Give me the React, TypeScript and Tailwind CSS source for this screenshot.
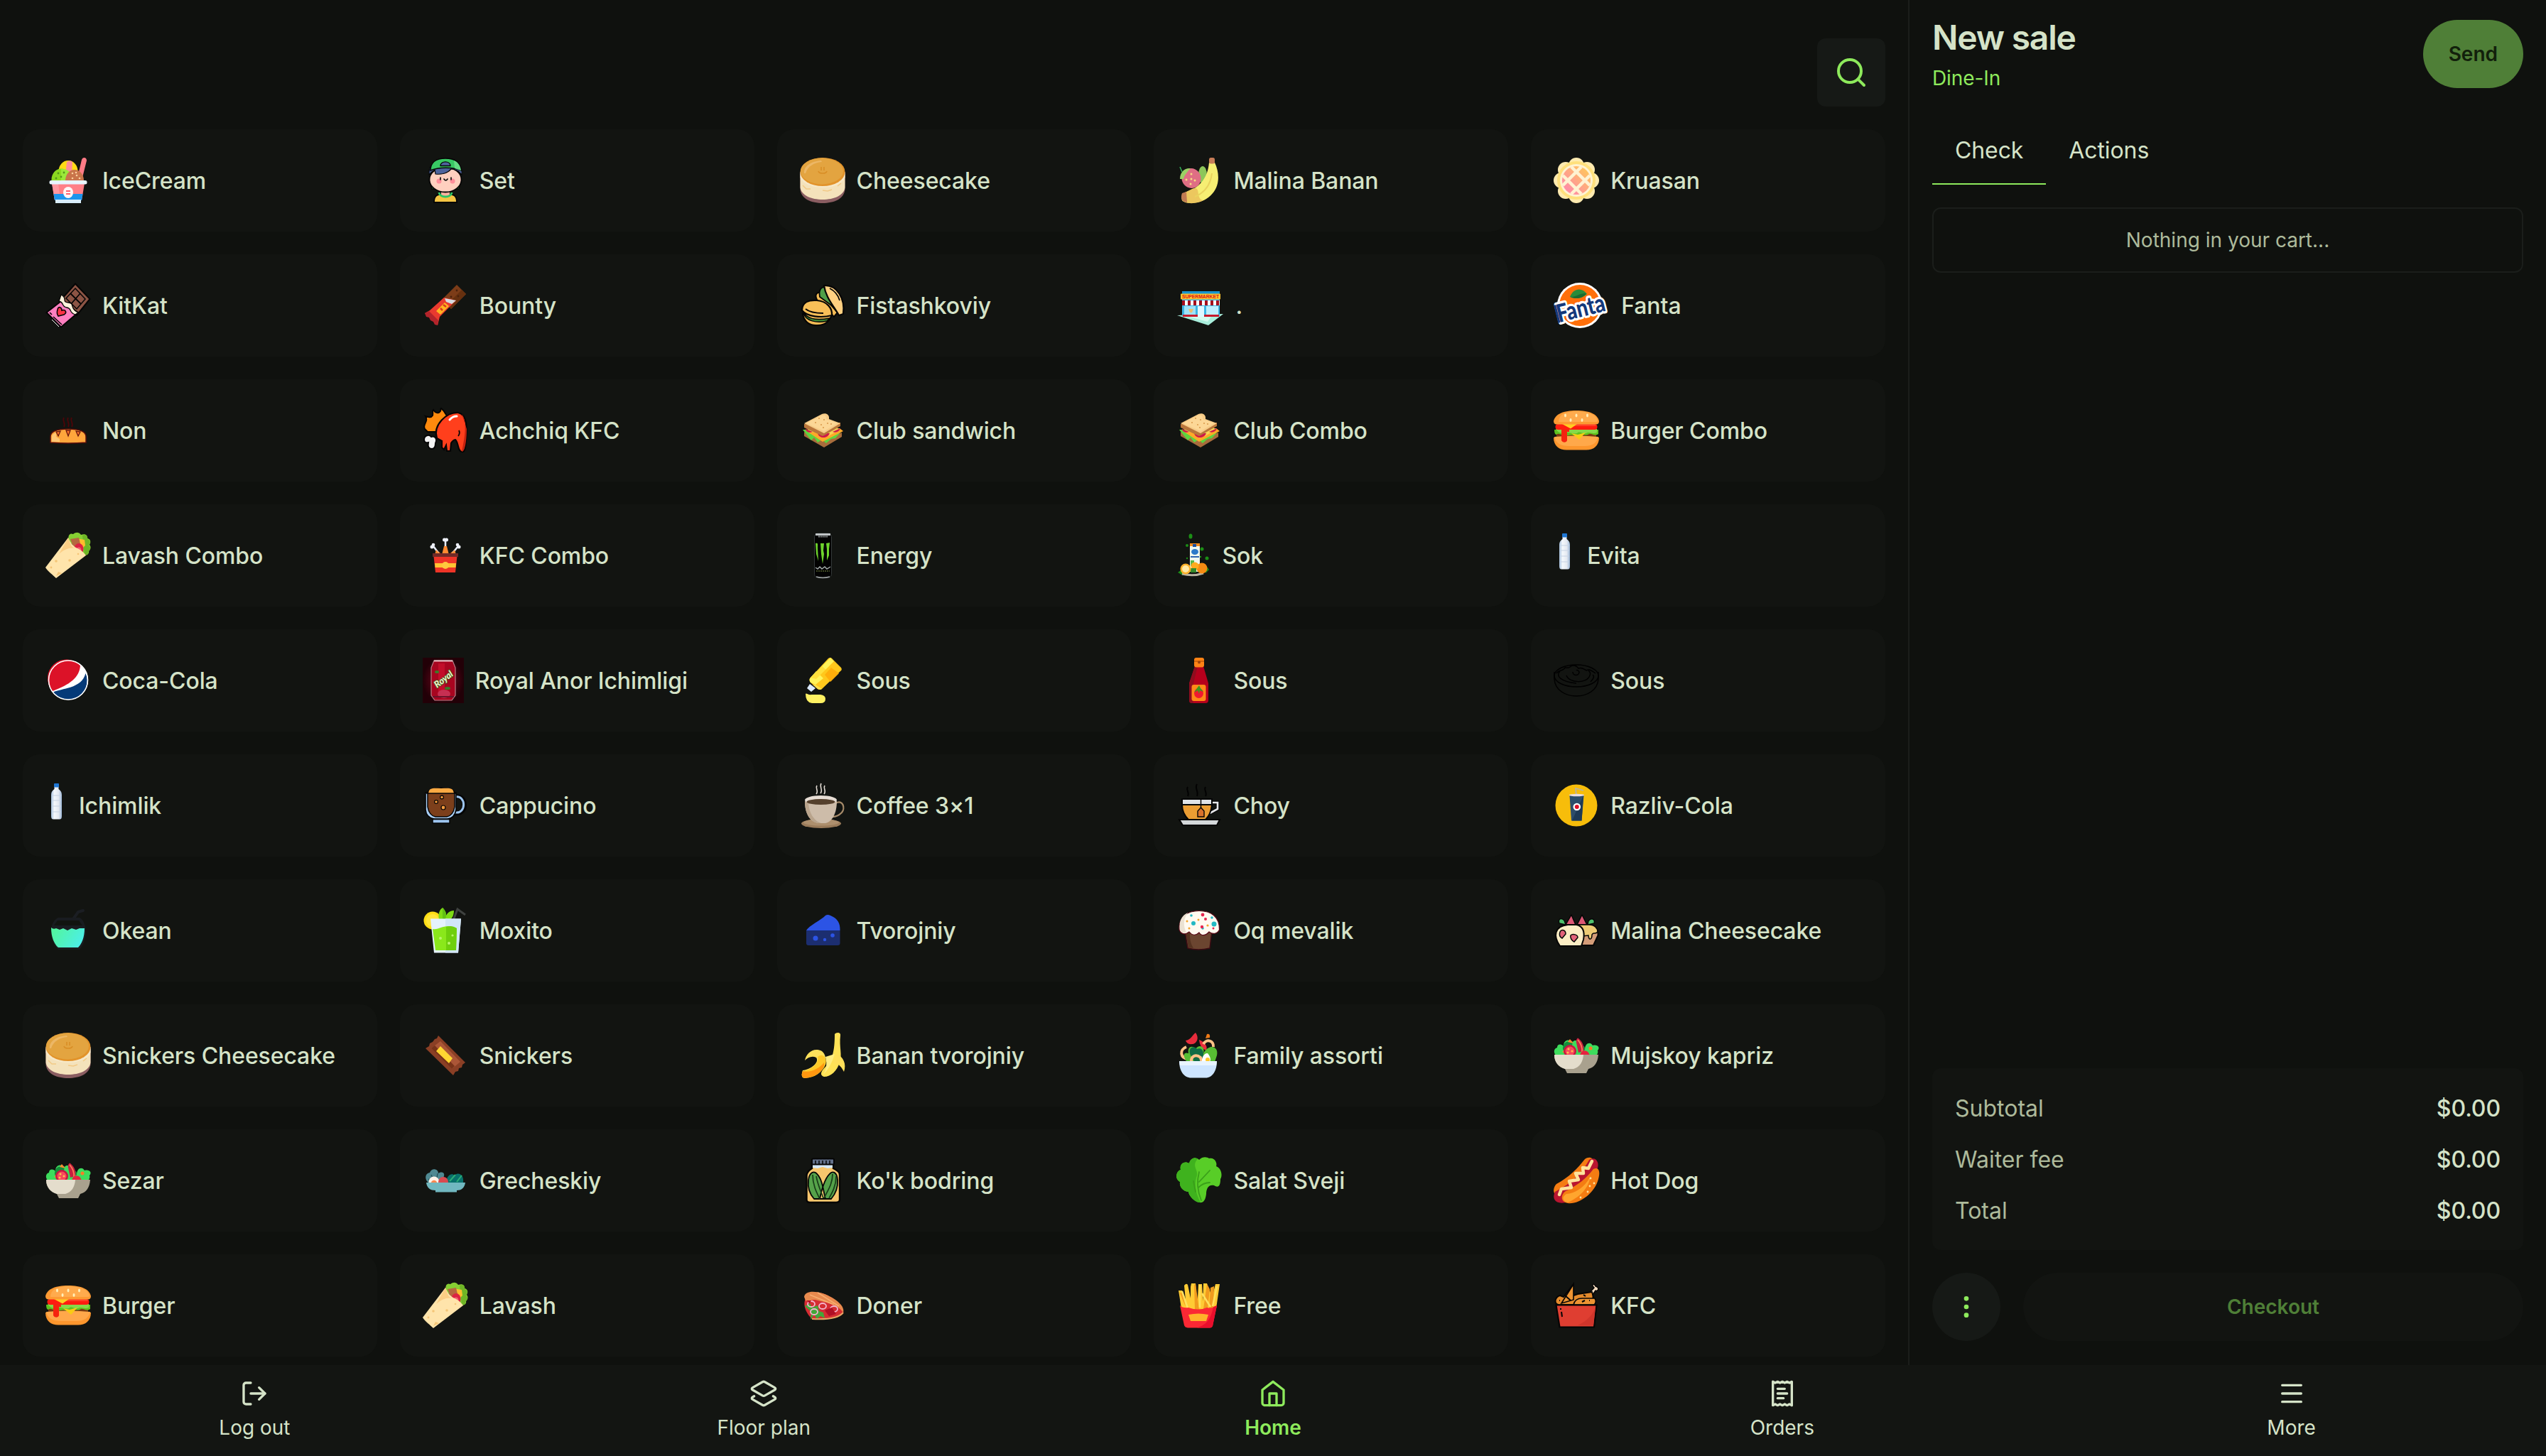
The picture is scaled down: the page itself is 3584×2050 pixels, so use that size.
import type { ReactNode } from "react";
import { Search, EllipsisVertical, LogOut, Layers2, Menu } from "lucide-react";

const K = "#050505";

function Pic({ w = 64, children }: { w?: number; children: ReactNode }) {
  return (
    <svg width={w} height={64} viewBox={`0 0 ${w} 64`} fill="none" className="shrink-0 overflow-visible">
      {children}
    </svg>
  );
}

const IceCream = () => (
  <Pic>
    <path d="M51 3C52-1 58-1 58 4L52 28H45Z" fill="#ff7b86" />
    <ellipse cx="32" cy="19" rx="13.5" ry="15" fill="#ffdc14" />
    <path d="M30 6C34 4 37 4 38 7L37 24H28Z" fill="#ff8d96" />
    <ellipse cx="22" cy="31" rx="13.500" ry="15.500" fill="#8bd920" />
    <path d="M22 15.500C39 16 39 32 32 33H22Z" fill="#9be83a" />
    <ellipse cx="41" cy="32" rx="13" ry="15" fill="#c9744a" />
    <g fill="#55991a"><circle cx="18" cy="22" r="1.400" /><circle cx="26" cy="21" r="1.400" /><circle cx="22" cy="27" r="1.400" /><circle cx="15" cy="29" r="1.400" /></g>
    <g fill="#ffcf9b"><circle cx="38" cy="22" r="1.300" /><circle cx="44" cy="25" r="1.300" /><circle cx="38" cy="29" r="1.300" /><circle cx="48" cy="29" r="1.300" /><circle cx="43" cy="21" r="1.300" /></g>
    <path d="M9 36H55L51 60H13Z" fill="#ff7f87" />
    <path d="M9 36H18L21 60H13Z" fill="#ff98a0" />
    <path d="M11.500 51H52.500L51 60H13Z" fill="#1c95ec" />
    <rect x="14" y="59" width="36" height="5" fill="#d9eefc" />
    <rect x="5.500" y="32" width="53" height="5.500" rx="2.500" fill="#e8f5ff" />
    <ellipse cx="32" cy="49" rx="7" ry="8" fill="#fff5f5" />
    <path d="M29 47H35M29 51H35" stroke="#ff6470" strokeWidth="2" />
  </Pic>
);

const Boy = () => (
  <Pic>
    <path d="M11 34L13 44H51L53 34Z" fill="#2dbd5a" stroke={K} strokeWidth="1.500" />
    <path d="M16 63C16 53 20 51 32 51C44 51 48 53 48 63Z" fill="#f5c544" stroke={K} strokeWidth="1.800" />
    <path d="M26 46H38V52L32 56L26 52Z" fill="#ffb3a0" />
    <path d="M23 49C24 57 40 57 41 49" stroke="#2fc565" strokeWidth="3" />
    <ellipse cx="32" cy="31" rx="22.500" ry="17.500" fill="#ffd0bf" stroke={K} strokeWidth="1.800" />
    <path d="M9 24C8 17 11 11 14 10H50C54 12 56 18 55 24L50 19C46 17 44 16 40 16C35 22 26 24 18 23L17 17L13 20Z" fill="#4d639b" stroke={K} strokeWidth="1.200" />
    <path d="M11 18C11 6 20 1 32 1C44 1 53 6 54 18C43 13 22 13 11 18Z" fill="#38c964" stroke={K} strokeWidth="1.500" />
    <path d="M44 4C51 7 53 12 54 18L45 15Z" fill="#63dc83" />
    <path d="M25 11.500C25 4 39 4 39 11.500Z" fill="#4d639b" stroke={K} strokeWidth="1.300" />
    <circle cx="23" cy="33" r="3.500" fill="#ff8e9b" /><circle cx="42" cy="33" r="3.500" fill="#ff8e9b" />
    <path d="M25 28V31M40 28V31M30 30Q32.500 34 35 30" stroke={K} strokeWidth="1.600" strokeLinecap="round" />
  </Pic>
);

const Cheesecake = () => (
  <Pic>
    <path d="M.5 20V45C2 58 16 64 32 64S62 58 63.500 45V20Z" fill="#8a5d61" />
    <path d="M.5 20V42C2 53 16 59 32 59S62 53 63.500 42V20Z" fill="#f4e2bb" />
    <path d="M.5 22V28C3 36 16 42 32 42S61 36 63.500 28V22Z" fill="#f7e8c8" />
    <path d="M4 39L9 44L15 44M32 46L39 47L45 45M53 40L58 36" stroke="#f2ca86" strokeWidth="1.500" />
    <ellipse cx="32" cy="20" rx="31.500" ry="20" fill="#e2932a" />
    <ellipse cx="31" cy="19" rx="30" ry="18.500" fill="#e3a440" />
    <path d="M6 22C5 12 16 5 30 4L31 6C20 7 11 12 8 22Z" fill="#ecb766" />
    <path d="M30 13V18M34 13V18M26 19C27 23 37 23 38 19" stroke="#d98e26" strokeWidth="1.600" />
  </Pic>
);

const MalinaBanan = () => (
  <Pic>
    <ellipse cx="37" cy="24" rx="6" ry="12" fill="#8cc65a" />
    <ellipse cx="21" cy="29" rx="13.500" ry="14" transform="rotate(-20 21 29)" fill="#df6e84" />
    <path d="M5 30C5 20 12 14 20 15C16 19 11 25 10 30Z" fill="#9bd065" />
    <path d="M8 20L5 13" stroke="#35b35b" strokeWidth="1.500" />
    <g fill="#f6dd84"><circle cx="21" cy="23" r="1.500" /><circle cx="26" cy="32" r="1.500" /><circle cx="20" cy="37" r="1.500" /><circle cx="14" cy="31" r="1.500" /><circle cx="21" cy="30" r="1.500" /></g>
    <path d="M46 7H54C62 24 61 44 45 56C34 65 13 66 8 60C7 55 8 51 12 49C34 42 44 28 46 7Z" fill="#f6ee73" />
    <path d="M22 44C36 38 26 58 38 60C30 65 13 66 8 60C7 55 8 51 12 49Z" fill="#ecc75e" />
    <path d="M50 22C48 40 38 50 26 55" stroke="#e9d35e" strokeWidth="2" />
    <path d="M8 50L14 48L15 63C6 62 6 55 8 50Z" fill="#c17a52" />
    <rect x="46" y="0" width="8" height="8.500" rx="2.500" fill="#c67c57" />
  </Pic>
);

const Kruasan = () => (
  <Pic>
    <g fill="#ffebb0">
      <circle cx="32" cy="11" r="11" /><circle cx="32" cy="53" r="11" /><circle cx="11" cy="32" r="11" /><circle cx="53" cy="32" r="11" />
      <circle cx="17" cy="17" r="11" /><circle cx="47" cy="17" r="11" /><circle cx="17" cy="47" r="11" /><circle cx="47" cy="47" r="11" />
    </g>
    <circle cx="32" cy="32" r="27" fill="#ffe07c" />
    <circle cx="32" cy="32" r="23" fill="#fff2d2" />
    <linearGradient id="pie" x1="0" y1="1" x2="1" y2="0"><stop offset=".2" stopColor="#ff8fa3" /><stop offset=".9" stopColor="#ffc65c" /></linearGradient>
    <circle cx="32" cy="32" r="20" fill="url(#pie)" />
    <path d="M13 39L39 13M25 51L51 25M13 25L39 51M25 13L51 39" stroke="#fff2d2" strokeWidth="4.500" />
  </Pic>
);

const KitKat = () => (
  <Pic>
    <path d="M42 1.500L62.500 23L44 46L22 24Z" fill="#8c5444" stroke={K} strokeWidth="2" />
    <path d="M42 8L56 23L44 37L29 22Z" fill="none" stroke={K} strokeWidth="1.500" />
    <path d="M35 15L50 30M49 15L36 30" stroke={K} strokeWidth="1.800" />
    <path d="M22 26L1.500 42L22 62.500L46 42Z" fill="#ff7fc0" stroke={K} strokeWidth="2" />
    <path d="M22 17C32 22 22 27 32 28C42 29 33 36 46 42L42 45C32 42 38 36 30 35C22 34 27 28 19 26Z" fill="#fff3dc" stroke={K} strokeWidth="1.300" />
    <path d="M17 38C18 32 23 35 23 39C28 37 31 42 26 45L18 47C16 44 16 41 17 38Z" fill="#ff3145" stroke={K} strokeWidth="1.600" />
    <path d="M11 48L23 59M6 42L9 45" stroke={K} strokeWidth="1.600" />
    <path d="M9 52L19 62" stroke="#fff" strokeWidth="1" />
  </Pic>
);

const Bounty = () => (
  <Pic>
    <path d="M48 3L61 16L40 37L27 24Z" fill="#7c3c18" />
    <path d="M55 10L61 16L40 37L34 31Z" fill="#66300f" />
    <g fill="#4c210b"><circle cx="48" cy="11" r="1.400" /><circle cx="40" cy="20" r="1.400" /><circle cx="50" cy="19" r="1.400" /><circle cx="44" cy="25" r="1.400" /></g>
    <path d="M30 21L47 25L24 48L21 60L3 43L10 39Z" fill="#e93a2f" />
    <path d="M3 43L9 40L22 53L21 60L17 59L15 55L11 53L9 49L5 48Z" fill="#b3242b" />
    <path d="M31 22L47 25L41 30L33 27Z" fill="#d6dbe0" />
    <path d="M31 28L37 33L25 45L19 40Z" fill="#ffb41f" />
    <path d="M29 31L33 34M25 36L28 39" stroke="#d9391f" strokeWidth="2.500" />
  </Pic>
);

const Pistachio = () => (
  <Pic>
    <path d="M24 24C20 16 25 12 30 15L53 42L48 48Z" fill="#f4bb55" stroke={K} strokeWidth="2" />
    <path d="M28 20C26 9 31 5 36 7L50 36Z" fill="#4f9f48" stroke={K} strokeWidth="1.800" />
    <path d="M34 4C52 3 64 22 61 44L55 46C47 32 36 20 34 4Z" fill="#ffd081" stroke={K} strokeWidth="2.200" />
    <path d="M42 8C50 12 54 18 56 25" stroke={K} strokeWidth="1.800" />
    <path d="M4 44C6 56 15 61 25 60C36 60 42 54 45 45Z" fill="#f4bb55" stroke={K} strokeWidth="2.200" />
    <path d="M4 41C10 50 20 54 42 50L38 54C24 57 8 55 4 41Z" fill="#3f8a34" stroke={K} strokeWidth="1.500" />
    <path d="M3 39C3 27 13 24 24 25C38 26 46 36 45 46C30 50 10 48 3 39Z" fill="#f8bf58" stroke={K} strokeWidth="2.200" />
    <path d="M8 37C14 42 22 43 33 43" stroke={K} strokeWidth="2" />
  </Pic>
);

const Market = () => (
  <Pic w={67}>
    <path d="M1 46L66 44L45 60Z" fill="#a9efdc" />
    <path d="M14 47L50 46L44 55Z" fill="#d4faee" />
    <rect x="8" y="12" width="53" height="5" fill="#1793cf" />
    <rect x="8" y="23" width="53" height="24" fill="#3cb4e4" />
    <rect x="11" y="33" width="16" height="12" fill="#9fe1f8" /><rect x="42" y="33" width="17" height="12" fill="#bdeeff" />
    <rect x="30" y="33" width="9" height="15" fill="#dff7ff" />
    <path d="M17 37H24L22 42H19Z" fill="#ecc274" />
    <rect x="6" y="15.500" width="56" height="8" rx="1" fill="#ffc62d" />
    <text x="34" y="22.200" textAnchor="middle" fontSize="7.500" fontWeight="800" fontFamily="Liberation Sans, sans-serif" fill="#e01515" textLength="52" lengthAdjust="spacingAndGlyphs">SUPERMARKET</text>
    <rect x="8" y="25" width="53" height="7" fill="#fff" />
    <path d="M10 25V32M18 25V32M26 25V32M34 25V32M42 25V32M50 25V32M58 25V32" stroke="#a50d1d" strokeWidth="4" />
    <rect x="9" y="45" width="21" height="3" fill="#c7192c" /><rect x="39" y="45" width="21" height="3" fill="#c7192c" />
  </Pic>
);

const Fanta = () => (
  <Pic w={79}>
    <circle cx="37" cy="32" r="32" fill="#fff" />
    <circle cx="37" cy="32" r="29" fill="#ff6f0a" />
    <path d="M23 20C27 9 39 5 47 16C41 22 31 24 23 20Z" fill="#2a8b3a" />
    <path d="M24 20C32 20 38 14 46 15C42 22 31 24 24 20Z" fill="#1c6a31" />
    <g transform="rotate(-14 39 36)">
      <text x="38" y="48" textAnchor="middle" fontSize="35" fontWeight="900" fontFamily="Lato, sans-serif" fill="#14387a" stroke="#fff" strokeWidth="6.500" paintOrder="stroke" strokeLinejoin="round" textLength="69" lengthAdjust="spacingAndGlyphs">Fanta</text>
      <path d="M4 24V47" stroke="#14387a" strokeWidth="3" strokeLinecap="round" />
    </g>
  </Pic>
);

const Bread = () => (
  <Pic>
    <path d="M26 14C23 18 29 22 26 27M32 14C29 18 35 22 32 27M37 14C34 18 40 22 37 27" stroke="#4c0508" strokeWidth="1.800" />
    <path d="M7 49V41C7 34 16 30 32 30S57 34 57 41V49Q32 51 7 49Z" fill="#ffa63c" stroke="#5c0f0a" strokeWidth="1.500" />
    <path d="M9 48V41C9 38 12 36 15 35V41L20 44V48Z" fill="#ffc573" />
    <path d="M15 34L18 40L21 33ZM29 32L32 40L35 32ZM43 33L46 40L49 34Z" fill="#f9742a" stroke="#6a160c" strokeWidth="1.300" />
  </Pic>
);

const HotWing = () => (
  <Pic>
    <path d="M3 30C-1 23 9 20 4 12C10 14 12 14 14 11C15 8 13 5 15 3C18 8 22 8 24 6C27 4 24 2 26 1C33 6 33 13 37 15L22 34H7Z" fill="#ff8a0d" stroke={K} strokeWidth="2" />
    <path d="M20 43C14 24 34 6 50 7C64 10 62 32 61 46C60 58 59 63 55 62C49 61 51 50 46 45C44 45 41 48 40 50L39 61L34 61L33 53L30 59L27 56V47Z" fill="#ff3f1c" stroke={K} strokeWidth="2.200" />
    <path d="M55 9C64 20 58 48 55 62C61 62 62 38 62 30Z" fill="#c4220f" />
    <path d="M38 17Q42 12 48 12" stroke="#fff" strokeWidth="3" strokeLinecap="round" />
    <path d="M51 32Q53 36 50 40" stroke={K} strokeWidth="1.800" />
    <path d="M2 45C2 39 9 37 12 41C17 39 21 44 18 50C18 56 16 58 13 58C8 58 7 54 8 49C4 50 2 48 2 45Z" fill="#f3f3f3" stroke={K} strokeWidth="2" />
  </Pic>
);

const Sandwich = () => (
  <Pic>
    <path d="M6 40L34 56L59 41V35L34 46L6 34Z" fill="#a86d3c" />
    <path d="M4 31L16 46L20 42L25 49L31 45L37 50L44 44L50 43L58 34L36 30Z" fill="#5ed43f" />
    <path d="M8 32L32 48L61 33L56 29Z" fill="#ffa928" />
    <path d="M8 28L16 35L28 32L40 40L56 31L50 26Z" fill="#f7d457" />
    <path d="M8 30C8 34 14 36 18 34ZM25 36C27 44 39 44 42 36ZM46 34C51 36 56 33 57 29Z" fill="#cf1949" />
    <path d="M6 23L6 28L32 40L36 38L57 26V21Z" fill="#b9763b" />
    <path d="M6 22L31 9C36 7 42 9 41 16L57 22L34 36Z" fill="#f6cb87" />
    <path d="M9 22L31 11C35 10 38 12 37 16L53 22L34 33Z" fill="#fcd796" />
    <g fill="#d99749"><circle cx="27" cy="15" r="1" /><circle cx="34" cy="17" r="1" /><circle cx="22" cy="21" r="1" /><circle cx="30" cy="24" r="1" /><circle cx="39" cy="22" r="1" /><circle cx="33" cy="28" r="1" /><circle cx="44" cy="23" r="1" /></g>
  </Pic>
);

const Burger = () => (
  <Pic>
    <path d="M4 36H60V43H4Z" fill="#7a3b12" />
    <path d="M0 42Q32 38 64 42C64 54 56 59.500 46 59.500H18C8 59.500 0 54 0 42Z" fill="#fd962d" />
    <path d="M1 41Q32 38 63 41C61 50 54 54 44 54H22C10 54 3 50 1 41Z" fill="#ffa84a" />
    <path d="M1 31H63V37C57 41 54 36 50 37C44 41 41 36 36 38C30 41 26 37 21 39C14 42 8 34 4 38Q1 38 1 31Z" fill="#5fc21f" />
    <path d="M3 30H61V35C55 38 50 33 46 36C41 38 37 32 33 36C27 38 22 33 14 36C8 36 5 33 3 30Z" fill="#86d94a" />
    <rect x="2.500" y="23" width="59" height="8" rx="4" fill="#ff1c10" />
    <path d="M22 23H56Q60 23 60 26H24Z" fill="#ff4028" />
    <path d="M14 30H22V34H19V46C18 50 12 49 11 46V31Z" fill="#f5230f" />
    <path d="M12 23H33L24 29.500Z" fill="#ffce22" /><path d="M25 36L34 38L45 35L36 45Z" fill="#f8cb14" />
    <path d="M0 19C2 9 14 4 32 4S62 9 64 19C64 22 62 23.500 60 23.500H4C2 23.500 0 22 0 19Z" fill="#fd9a33" />
    <path d="M7 20C7 10 16 5 32 5S60 9 62 18Q62 20 59 20Z" fill="#ffab4d" />
    <g fill="#fff0ba"><ellipse cx="16.500" cy="11" rx="1.500" ry="2.400" /><ellipse cx="32" cy="11" rx="1.500" ry="2.400" /><ellipse cx="47.500" cy="11" rx="1.500" ry="2.400" /><ellipse cx="24" cy="17.500" rx="1.500" ry="2.400" /><ellipse cx="40" cy="17.500" rx="1.500" ry="2.400" /></g>
  </Pic>
);

const Wrap = () => (
  <Pic>
    <path d="M33 12C31 4 34 0 39 2C43-1 47-1 50 3C56 1 59 3 59 8C64 9 64 14 62 17C65 21 63 24 61 26C62 30 58 33 53 30Z" fill="#86cf33" />
    <path d="M52 4C58 1 60 6 59 9C64 11 63 15 61 18C65 22 62 25 60 27C61 30 58 33 55 31Z" fill="#6fb526" />
    <path d="M42 8L55 10L56 18L50 24Z" fill="#ffbe2e" />
    <path d="M35 9L47 7L50 20L40 22Z" fill="#b5683f" />
    <ellipse cx="47" cy="23" rx="6.500" ry="8" fill="#dc2342" /><ellipse cx="47" cy="25" rx="3.500" ry="4.500" fill="#f5616f" />
    <path d="M32 7C34 12 39 20 45 22C50 24 55 29 57 32L15 64C11 60 3 54 0 49Z" fill="#ffe4ab" />
    <path d="M32 7L36 18C38 21 42 22 45 22C35 20 26 23 19 30Z" fill="#fbce85" />
    <g fill="#f4c577"><circle cx="15" cy="40" r="1.800" /><circle cx="34" cy="39" r="1.800" /><circle cx="8" cy="49" r="1.400" /><circle cx="46" cy="30" r="1.300" /><path d="M15 61L18 55L23 57Z" /></g>
  </Pic>
);

const Drumsticks = () => (
  <Pic>
    <path d="M32 11V24M15 19L24 31M50 19L40 31" stroke="#e6ebf6" strokeWidth="2.600" />
    <g fill="#eef1fa"><circle cx="30.500" cy="10" r="2.500" /><circle cx="33.500" cy="10" r="2.500" /><circle cx="13" cy="20" r="2.500" /><circle cx="15" cy="17" r="2.300" /><circle cx="51" cy="20" r="2.500" /><circle cx="49" cy="17" r="2.300" /></g>
    <path d="M27 31L30 19H34L37 31ZM17 31L19 24L25 31ZM47 31L45 24L39 31Z" fill="#ff8a32" />
    <path d="M22 26L27 31H37L42 26L40 31H24Z" fill="#f57c22" />
    <path d="M15.500 33H48.500L46 56H18Z" fill="#ef3427" />
    <path d="M17 43H47L46.500 49H17.500Z" fill="#ffc532" /><circle cx="32" cy="46" r="5" fill="#ffca3e" />
    <rect x="14" y="29" width="36" height="5" fill="#712a27" />
  </Pic>
);

const Energy = () => (
  <Pic>
    <rect x="20.500" y="1" width="24" height="62" rx="4.500" fill="#020202" stroke="#343a3a" strokeWidth="1" />
    <path d="M22 2.500H43" stroke="#bfc4c6" strokeWidth="3" />
    <path d="M26 5.500H39" stroke="#8d9393" strokeWidth="2" strokeDasharray="2 .8" />
    <path d="M22 15C26 14 25 16 25 22L26 40L23 30ZM29 15H34L33 25L34 30L32 44L30 30ZM37 15L42 14L41 23L41 32L38 39L38 23Z" fill="#6ed42c" />
    <path d="M22 49L25 51L28 48L31 51L35 48L38 51L43 48" stroke="#a4acaa" strokeWidth="1.400" />
    <path d="M23 54H42" stroke="#56632f" strokeWidth="1.400" strokeDasharray="2 1" />
    <path d="M23 62Q32 65 42 62" stroke="#9ea3a4" strokeWidth="1.400" />
  </Pic>
);

const Sok = () => (
  <Pic w={48}>
    <g fill="#1c8f16"><ellipse cx="20" cy="5" rx="2.500" ry="3.500" /><circle cx="15" cy="18" r="2" /><circle cx="36" cy="23" r="2.500" /><circle cx="43" cy="36" r="2.500" /><circle cx="34" cy="34" r="1.200" /><circle cx="15" cy="36" r="1.200" /></g>
    <path d="M2 56L10 50L9 60ZM40 44L46 52L41 57Z" fill="#1c8f16" />
    <path d="M8 58Q24 62 38 57" stroke="#b9b3a0" strokeWidth="3" />
    <rect x="19" y="15" width="14" height="40" fill="#eff7ef" />
    <rect x="19" y="15" width="14" height="4" fill="#f08a1e" /><rect x="23" y="16" width="5" height="4" fill="#1a4fa0" />
    <ellipse cx="26" cy="27" rx="5" ry="4" fill="#2b78c9" /><path d="M20 34H32" stroke="#2f65b3" strokeWidth="2" />
    <rect x="20" y="39" width="5" height="8" fill="#57b84a" />
    <circle cx="36" cy="50" r="7.500" fill="#f68b12" /><circle cx="26" cy="47" r="5.500" fill="#ffab1f" />
    <rect x="20" y="50" width="8" height="6" fill="#338b2a" />
    <circle cx="13" cy="51" r="7.500" fill="#ffb12a" /><circle cx="13" cy="51" r="5" fill="#ffe9a6" />
  </Pic>
);

const Bottle = () => (
  <Pic w={31}>
    <linearGradient id="water" x1="0" x2="1" y1="0" y2="0"><stop offset="0" stopColor="#a9c2de" /><stop offset=".3" stopColor="#f4f8fc" /><stop offset=".7" stopColor="#e4e9f1" /><stop offset="1" stopColor="#9db8d8" /></linearGradient>
    <path d="M12.500 5H18.500V9C21 11 23 13 23 17V47C23 50 22 51.500 20 51.500H11C9 51.500 8 50 8 47V17C8 13 10 11 12.500 9Z" fill="url(#water)" />
    <path d="M9 18H22M9 25H22M9 33H22M9 41H22" stroke="#c6d3e4" strokeWidth="1" />
    <rect x="12" y="1" width="7" height="5.500" rx="1" fill="#1f76d3" />
  </Pic>
);

const Pepsi = () => (
  <Pic>
    <circle cx="32" cy="31.500" r="28" fill="#fff" />
    <path d="M10 47A26.500 26.500 0 1 1 49 11C48 28 34 38 10 47Z" fill="#dc1228" />
    <path d="M11 48.500C22 43 51 44 56.500 22A26.500 26.500 0 0 1 11 48.500Z" fill="#053a78" />
    <circle cx="32" cy="31.500" r="27.500" stroke="#fff" strokeWidth="1.600" />
  </Pic>
);

const Royal = () => (
  <Pic w={58}>
    <radialGradient id="halo"><stop offset="0" stopColor="#7e0622" /><stop offset="1" stopColor="#220007" /></radialGradient>
    <rect width="58" height="64" fill="url(#halo)" />
    <path d="M16 4H42L46 14V53L41 60H17L12 53V14Z" fill="#a80520" stroke="#b98089" strokeWidth="1.200" />
    <rect x="22" y="8" width="9" height="48" fill="#f3203f" opacity=".35" />
    <path d="M16 4.500H42" stroke="#e9c2c6" strokeWidth="2" />
    <ellipse cx="30" cy="51" rx="9" ry="6" fill="#c62f52" /><path d="M14 55H44" stroke="#6c1229" strokeWidth="2" />
    <ellipse cx="20" cy="20" rx="3" ry="2" fill="#3c7b27" /><ellipse cx="35" cy="43" rx="4" ry="2" fill="#3c7b27" />
    <text x="29" y="35" transform="rotate(-38 29 30)" textAnchor="middle" fontSize="13" fontWeight="900" fontStyle="italic" fontFamily="Lato, sans-serif" fill="#eef0c9" stroke="#39601d" strokeWidth="1.500" paintOrder="stroke">Royal</text>
  </Pic>
);

const Mustard = () => (
  <Pic>
    <path d="M40 1Q43-1 45 1L58 14Q60 17 57 19L31 44Q28 46 25 44L15 35Q12 31 15 28Z" fill="#ffc81c" />
    <path d="M43 0L48 5L36 17L31 12ZM23 19L33 29L22 38L15 35Q12 31 15 28Z" fill="#fff35a" />
    <path d="M44 14L55 22L43 34L35 24Z" fill="#ffae0b" />
    <path d="M31 12L36 17L23 30L15 28Z" fill="#ffdf3c" />
    <path d="M22 38L31 44Q28 46 25 44L18 38Z" fill="#ffe14a" />
    <path d="M14 37L22 43L16 48L10 43Z" fill="#dcebff" />
    <path d="M8 51C9 49 11 53 17 52H29Q36 53 36 58Q36 64 29 64H17Q8 63 8 51Z" fill="#fff162" />
  </Pic>
);

const Ketchup = () => (
  <Pic>
    <path d="M26 12H38L45 36V60Q45 64 41 64H22Q18 64 18 60V36Z" fill="#b5001c" />
    <path d="M26 12H30L24 36V64H22Q18 64 18 60V36Z" fill="#8f0c1e" />
    <rect x="25" y="0" width="14" height="13.500" rx="3" fill="#ff8315" /><path d="M25 5H39" stroke="#c25a0b" strokeWidth="1.500" />
    <circle cx="32" cy="6.500" r="2" fill="#9e430d" />
    <rect x="21.500" y="38" width="20" height="23" rx="3" fill="#ff8a18" />
    <ellipse cx="31.500" cy="50" rx="6.500" ry="7" fill="#f01a30" />
    <path d="M32 39L34 43L38 48L33 46L32 51L30 46L25 49L29 43Z" fill="#3f9a1d" />
  </Pic>
);

const Bowl = () => (
  <Pic>
    <g stroke="#010101" strokeWidth="1.500">
      <ellipse cx="32" cy="25.500" rx="31" ry="15.500" />
      <path d="M1 20V30C2 46 17 54 32 54S62 46 63 30V20" />
      <path d="M4 22C8 16 13 20 16 14C21 15 23 14 24 12C28 10 32 11 35 15C40 13 43 16 46 18C51 15 54 19 59 22" />
      <path d="M9 19C2 26 11 34 32 36M18 25C22 36 47 37 51 25C53 21 50 19 49 18M27 20C27 26 36 26 36 20C35 18 33 17 32 18" />
      <path d="M55 24Q59 27 52 34" />
    </g>
  </Pic>
);

const Cappuccino = () => (
  <Pic>
    <path d="M46 20C62 16 64 45 46 43" stroke={K} strokeWidth="6.500" /><path d="M46 20C61 17 62 44 46 42" stroke="#9cc4ee" strokeWidth="3" />
    <path d="M4 14H47V38Q45 50 35 51H16Q5 49 4 38Z" fill="#a9cff5" stroke={K} strokeWidth="1.600" />
    <path d="M7 14C9 5 43 5 45 14V34Q43 46 34 48H18Q9 46 7 34Z" fill="#7c3f1b" stroke={K} strokeWidth="1.500" />
    <path d="M8.500 15C8 6 17 8 26 8S44 6 43.500 15Z" fill="#fba943" /><path d="M5 15H47" stroke={K} strokeWidth="1.300" />
    <g fill="#f59b3d" stroke={K} strokeWidth="1.200"><circle cx="27" cy="20.500" r="2.400" /><circle cx="19" cy="27" r="2.400" /><circle cx="29" cy="35" r="3" /></g>
    <rect x="14" y="51.500" width="24" height="5.500" fill="#9cc4ee" stroke={K} strokeWidth="1.500" />
  </Pic>
);

const Coffee = () => (
  <Pic>
    <path d="M24 4C21 8 27 11 23 16M30 1C27 6 33 10 29 15M35 4C32 8 38 11 34 16" stroke="#e2dbd3" strokeWidth="1.600" />
    <ellipse cx="30" cy="57.500" rx="28" ry="6.500" fill="#9a7b5a" /><ellipse cx="30" cy="56" rx="25" ry="4.500" fill="#ad8f6d" />
    <path d="M50 29C61 23 64 36 59 42Q53 48 46 48" stroke="#a68b6a" strokeWidth="2.300" />
    <path d="M7 26H52C52 42 46 55 36 57H26C13 55 7 42 7 26Z" fill="#cdbca9" />
    <path d="M7 26H12C12 42 20 54 30 57H26C13 55 7 42 7 26Z" fill="#b9a48c" />
    <ellipse cx="29.500" cy="24.500" rx="22.500" ry="6.500" fill="#e6ddd4" />
    <ellipse cx="29.500" cy="27" rx="20" ry="4" fill="#55402c" />
  </Pic>
);

const Tea = () => (
  <Pic>
    <path d="M16 6C13 10 19 14 16 19M29 2C25 8 32 12 29 19M41 6C38 10 44 14 41 19" stroke="#020202" strokeWidth="2" />
    <path d="M49 28H58V37L47 43" stroke={K} strokeWidth="5" /><path d="M49 28H58V37L47 43" stroke="#e6e7ea" strokeWidth="2.600" />
    <path d="M8 23H50V31C49 42 45 48 41 52H17C11 46 8 40 8 31Z" fill="#eb9d33" stroke={K} strokeWidth="2" />
    <rect x="9" y="24" width="40" height="6.500" fill="#dfe3e7" /><path d="M8 31H50" stroke={K} strokeWidth="2" />
    <path d="M34.500 22V37" stroke={K} strokeWidth="1.500" /><path d="M34.500 35L39 40V48H30V40Z" fill="#d9722c" stroke={K} strokeWidth="1.400" />
    <path d="M4 52H61L57 60H9Z" fill="#d4d8da" stroke={K} strokeWidth="2" />
  </Pic>
);

const Cola = () => (
  <Pic>
    <circle cx="32" cy="32" r="29.500" fill="#f7bd0a" />
    <path d="M32 18L31 8L42 11" stroke="#b9b3a3" strokeWidth="1.800" />
    <path d="M22.500 18H42.500L39.500 53.500H25Z" fill="#2d4d6a" /><path d="M42 18L26 53.500H39.500Z" fill="#1d3955" />
    <ellipse cx="32.500" cy="17.500" rx="10.700" ry="1.700" fill="#e9dce0" />
    <circle cx="32.800" cy="34" r="5.300" fill="#fff" /><circle cx="32.800" cy="34" r="3" fill="#df1027" />
  </Pic>
);

const Coconut = () => (
  <Pic>
    <linearGradient id="sea" x1="0" x2="1" y1=".5" y2=".9"><stop offset="0" stopColor="#52f5a4" /><stop offset="1" stopColor="#4bedf2" /></linearGradient>
    <path d="M39 16L46 6L53 4" stroke="#1b1e23" strokeWidth="4" strokeLinecap="round" />
    <path d="M18 14H48C59 20 60 44 48 59H18C4 44 5 20 18 14Z" fill="#191c20" />
    <path d="M17 18H47L52 25H12Z" fill="#111410" />
    <path d="M8 28Q11 31 15 29L20 31L25 29L31 32L37 29L43 31L48 29L55 29C55 42 51 51 46 56H18C12 51 8 41 8 28Z" fill="url(#sea)" />
  </Pic>
);

const Mojito = () => (
  <Pic>
    <path d="M43 18L49 2L60 10" stroke="#3f4240" strokeWidth="3" />
    <circle cx="14" cy="18" r="12.500" fill="#ffde16" /><circle cx="14" cy="18" r="9" fill="#ffe53a" />
    <path d="M23 16C21 7 25 2 28 0C33 5 34 9 32 16ZM31 16C33 8 38 4 44 4C44 11 41 16 38 17Z" fill="#7edb14" /><path d="M28 0C33 5 34 9 32 16H28Z" fill="#62c014" />
    <path d="M11 15.500H54L50 63.500H16Z" fill="#e5f2fd" /><path d="M32 15.500H54L50 63.500H32Z" fill="#d1e6f7" />
    <path d="M14 30C25 32 30 21 48 29L47 60H18Z" fill="#8ae81b" /><path d="M33 27C39 25 43 26 48 29L47 60H33Z" fill="#6fcf0d" />
    <g fill="#baf66d"><circle cx="25" cy="43" r="2" /><circle cx="37" cy="50" r="2" /><circle cx="42" cy="39" r="1.600" /></g>
  </Pic>
);

const Cheese = () => (
  <Pic>
    <path d="M9 32H56.500V50Q56.500 53 53 53H12Q9 53 9 50Z" fill="#1c2e70" />
    <path d="M9 32C13 25 29 18 36 11Q39 9 43 11C53 15 57 22 56.500 32Z" fill="#2c54e5" />
    <g fill="#2c54e5"><circle cx="22" cy="43" r="3.500" /><circle cx="35" cy="45" r="2.200" /><circle cx="46" cy="39" r="2.800" /></g>
  </Pic>
);

const Cupcake = () => (
  <Pic>
    <path d="M12 33H50L47 57Q31 61 16 57Z" fill="#6b4530" stroke="#3d0b13" strokeWidth="1.500" />
    <path d="M13 34L17 56L24 57Q18 48 19 34Z" fill="#543220" />
    <path d="M4 31C3 13 15 4.500 32 4.500S61 13 60.500 31C58 37 51 38 46 34C41 40 35 40 32 35C27 40 22 39 18 34C12 39 6 37 4 31Z" fill="#fffaf0" stroke="#5a0a18" strokeWidth="1.200" />
    <path d="M5 31C3 18 8 11 16 7C9 18 10 26 14 35Q8 37 5 31Z" fill="#ebe2d2" />
    <g fill="#23b9c4"><circle cx="24" cy="22" r="3" /><circle cx="53" cy="23" r="3.500" /><circle cx="21" cy="11" r="1.800" /><circle cx="37" cy="29" r="1.800" /><circle cx="50" cy="14" r="1.800" /></g>
    <g fill="#e8244f"><circle cx="37" cy="10" r="2.400" /><circle cx="41" cy="16" r="2" /><circle cx="36" cy="27" r="2.200" /><circle cx="52" cy="29" r="1.500" /></g>
    <g fill="#f5a42c"><circle cx="31" cy="17" r="1.500" /><circle cx="15" cy="19" r="1.500" /><circle cx="44" cy="25" r="1.600" /><circle cx="18" cy="29" r="1.500" /></g>
  </Pic>
);

const MalinaCake = () => (
  <Pic>
    <path d="M8 22C6 15 11 14 15 18L17 24ZM57 22C59 15 52 14 49 19L48 24Z" fill="#4fc16d" stroke={K} strokeWidth="1.300" />
    <path d="M17 24L25 10L31 24ZM33 24L40 10L47 24Z" fill="#dc5875" stroke={K} strokeWidth="1.500" strokeLinejoin="round" />
    <path d="M17 24H50C58 24 63 31 62.500 39L56 53H30Z" fill="#d49c78" stroke={K} strokeWidth="2" />
    <path d="M35 24H50C58 24 62 29 62 34C58 39 56 33 54 38C54 46 49 46 49 39L41 40Z" fill="#eecb75" stroke={K} strokeWidth="1.500" />
    <path d="M20 24H32C42 26 44 34 42 45L39 54H9C-1 40 1 26 20 24Z" fill="#fbedc4" stroke={K} strokeWidth="2" />
    <path d="M9 34C11 30 17 31 17 37L12 43C8 41 8 37 9 34ZM24 39C27 36 34 38 34 42L29 48C25 46 23 42 24 39Z" fill="#e2627a" stroke={K} strokeWidth="1.500" />
  </Pic>
);

const Snickers = () => (
  <Pic>
    <path d="M22 4L60 42L56 45L55 49L51 50L50 54L46 55L43 60L4 22L9 19L10 15L14 13L17 9L20 8Z" fill="#8a3f25" />
    <path d="M25 12L53 41L41 51L12 22Z" fill="#ab5637" /><path d="M12 22L17 18L45 47L41 51Z" fill="#783319" />
    <path d="M25 19L42 36L37 43L19 26Z" fill="#ffd632" />
  </Pic>
);

const Banana = () => (
  <Pic>
    <path d="M49 2C51-1 58-1 57 4C55 20 60 32 56 42C52 54 44 62 34 62Q25 59 36 48C48 38 49 18 49 2Z" fill="#ffe256" />
    <path d="M7 39C9 29 19 20 31 26C36 30 37 37 36 42C32 54 19 64 5 63.500Q1 62 4 53C15 52 28 42 23 35C17 32 11 35 7 39Z" fill="#ffe15b" />
    <path d="M4 54C16 53 28 42 25 34C33 27 39 38 36 45C31 57 18 65 5 63.500Q1 62 4 54Z" fill="#ffc928" /><path d="M4 54C15 57 28 50 34 42C36 54 18 65 5 63.500Q1 62 4 54Z" fill="#ff9710" />
    <path d="M52 30C61 34 66 44 62 55C57 45 51 42 46 43Z" fill="#ffdf5a" /><path d="M36 34Q40 50 32 60Q43 50 49 30Z" fill="#ffed83" />
  </Pic>
);

const Assorti = () => (
  <Pic>
    <path d="M13 11C20 10 22 4 27 0C33 8 28 16 22 16Q15 17 13 11ZM32 10C38 12 45 18 42 25Q33 22 32 10Z" fill="#e82c3c" />
    <path d="M43 2Q48 1 47 7L41 8Z" fill="#ef7a16" /><path d="M38 16C42 8 53 11 52 20M17 37C5 36 4 24 14 20" stroke="#ffc286" strokeWidth="4" />
    <path d="M14 40C8 31 11 27 17 29C15 18 24 18 27 23C32 15 41 20 38 29C47 14 60 20 57 32L54 41Z" fill="#57bd33" />
    <path d="M20 32C15 21 25 17 29 23C38 19 41 32 35 40H25Z" fill="#0f6b45" />
    <path d="M21 42C20 32 28 30 34 35L36 42" stroke="#ffc286" strokeWidth="4" /><path d="M36 42C35 34 40 28 44 29C49 35 50 42 43 42Z" fill="#fff" /><circle cx="44" cy="38" r="3" fill="#ffc829" />
    <path d="M4 40H57C57 53 51 63.500 41 63.500H21C10 63.500 4 53 4 40Z" fill="#cde5ff" /><path d="M4 40H57L56 46H5Z" fill="#e8f4ff" />
  </Pic>
);

const Salad = () => (
  <Pic>
    <path d="M5 34C-1 29 0 22 5 21C5 15 12 16 14 19C14 9 23 9 27 13C30 9 36 11 38 19L44 24C44 14 52 12 55 18C62 16 66 21 62 25C64 31 57 35 54 36Z" fill="#3ddc5c" />
    <path d="M13 24C12 12 22 11 27 13L24 27ZM39 22C41 16 45 19 44 25Z" fill="#148e3a" />
    <path d="M20 13L23 9L28 15ZM12 27L18 23L19 30Z" fill="#ff8c32" />
    <path d="M32 14C31 10 34 6 35 8C40 12 44 19 42 26L35 28Z" fill="#c51f40" /><path d="M34 10Q41 18 40 27" stroke="#ff7b55" strokeWidth="1.800" />
    <circle cx="23" cy="26" r="9" fill="#c81740" /><circle cx="23" cy="26" r="6.500" fill="#f9495c" /><g fill="#ffc04f"><circle cx="21" cy="23" r="1.500" /><circle cx="26" cy="26" r="1.500" /><circle cx="20" cy="28" r="1.500" /></g>
    <path d="M37 33C38 21 51 24 51 34Z" fill="#e6233f" /><circle cx="52" cy="22" r="2.500" fill="#ff7a27" />
    <path d="M1 31H63C62 43 57 49 49 51L46 57H19L16 51C7 48 1 42 1 31Z" fill="#a9a18e" />
    <path d="M1 31H42C41 42 37 48 28 51H16C7 48 1 42 1 31Z" fill="#e4ddcc" />
  </Pic>
);

const GreekSalad = () => (
  <Pic>
    <path d="M9 36C2 31 3 22 10 21C12 14 22 15 22 22C29 18 33 23 28 30L32 36Z" fill="#4f8992" /><path d="M12 24L17 35M21 22L19 35M8 30L14 35" stroke="#26535b" strokeWidth="1.300" />
    <path d="M34 36C32 27 40 20 45 25C48 20 59 22 57 36Z" fill="#08716b" /><path d="M38 33L46 24M48 34L55 25" stroke="#2caf78" strokeWidth="2" />
    <circle cx="16" cy="34" r="7.500" fill="#fff3e9" /><circle cx="16" cy="36" r="4.200" fill="#ff8950" /><circle cx="29" cy="34" r="7" fill="#d94a50" />
    <path d="M5 35H60C59 43 54 46 48 46V48.500H18V46C11 46 6 43 5 35Z" fill="#71b8c0" />
  </Pic>
);

const Jar = () => (
  <Pic>
    <path d="M17 8H47V15C56 20 56 21 56 25V59Q56 63 51 63H14Q9.500 63 9.500 59V25C10 21 12 18 17 15Z" fill="#f7c66d" stroke={K} strokeWidth="2.400" />
    <path d="M18 9H46V14L39 15L32 13L25 15L18 14Z" fill="#d5e9fb" />
    <rect x="17" y="1.500" width="31" height="8" rx="1.500" fill="#63718b" stroke={K} strokeWidth="2" /><path d="M22 4V9M27 4V9M32 4V9M37 4V9M42 4V9" stroke={K} strokeWidth="1.500" />
    <path d="M20 58C6 42 12 16 22 21C32 28 33 48 36 58ZM44 58C58 42 54 16 44 21C34 28 30 48 28 58Z" fill="#55a24a" stroke={K} strokeWidth="1.800" />
    <path d="M18 24C18 38 23 48 28 58M23 26C25 38 30 48 33 57M46 23C46 38 38 48 34 57M51 26C51 40 45 50 41 57" stroke="#183c18" strokeWidth="1.700" />
  </Pic>
);

const Lettuce = () => (
  <Pic>
    <path d="M18 8C20-1 29-1 32 3C37-2 43-1 46 1C54-1 58 8 56 12C64 15 65 26 62 30C62 40 59 43 53 39C45 37 42 44 42 51C41 60 38 64 32 63C22 58 18 54 17 48C9 47 4 41 5 34C-3 29 0 19 6 17C4 8 12 4 18 8Z" fill="#58cd27" />
    <path d="M18 8C20-1 28-1 30 2C20 12 33 18 28 28C25 38 27 50 34 63C26 64 18 54 17 48C9 47 4 41 5 34C-3 29 0 19 6 17C4 8 12 4 18 8Z" fill="#3fb21e" />
    <path d="M35 60C30 48 28 35 32 20M32 34L47 18M31 42Q38 35 47 35M24 33L27 48" stroke="#3a9f1a" strokeWidth="1.800" strokeLinecap="round" />
  </Pic>
);

const HotDog = () => (
  <Pic>
    <path d="M44 2C49-2 56-1 56 6C48 25 24 48 7 55C-2 52-1 42 4 37C21 28 34 15 44 2Z" fill="#f47c12" />
    <path d="M50 3C59-3 66 7 61 17C51 37 35 53 17 63C3 66-3 58 2 48C26 36 41 20 50 3Z" fill="#b91530" />
    <path d="M56 16C64 12 66 20 63 30C58 50 36 66 20 64C9 62 10 52 17 47C34 39 46 29 56 16Z" fill="#f47c12" /><path d="M52 26C44 42 29 51 18 51C10 56 14 62 20 63C36 56 49 44 52 26Z" fill="#ffa52e" />
    <path d="M54 5L49 15L41 14L42 22L31 22L35 31L22 33L25 42L11 44L8 52" stroke="#ffe39c" strokeWidth="4.500" strokeLinejoin="round" strokeLinecap="round" />
    <g fill="#ffe39c"><circle cx="57" cy="36" r="1.400" /><circle cx="51" cy="40" r="1.400" /><circle cx="48" cy="48" r="1.400" /><circle cx="38" cy="56" r="1.400" /><circle cx="52" cy="29" r="1.400" /></g>
  </Pic>
);

const Doner = () => (
  <Pic>
    <path d="M8 22C10 12 28 11 41 19C55 26 63 38 61 43C56 51 32 52 17 51C11 45 3 34 8 22Z" fill="#d52c32" />
    <path d="M6 20C7 12 19 11 32 15C52 22 64 34 61 42C51 28 34 28 22 24C14 23 13 29 8 25Z" fill="#e88a4e" /><path d="M14 17L48 31M25 14L55 33" stroke="#f8ac70" strokeWidth="1.800" />
    <path d="M7 33L14 29L17 35L25 32L27 40L33 42L35 50L29 47L24 51L20 45L15 52L16 41Z" fill="#42a739" />
    <g stroke="#f2b4cc" strokeWidth="1.800"><ellipse cx="16" cy="30" rx="5" ry="4" /><ellipse cx="32" cy="33" rx="5" ry="4" /><ellipse cx="48" cy="37" rx="5" ry="4" /><ellipse cx="20" cy="41" rx="5" ry="4" /></g>
    <path d="M35 39L45 35L51 44L41 47ZM9 25L16 25L14 29Z" fill="#b00f25" /><path d="M17 51Q52 53 61 42" stroke="#e5a562" strokeWidth="2" />
  </Pic>
);

const Fries = () => (
  <Pic>
    <path d="M3 11H8L17 36H7ZM11 4Q14 0 16 3L23 36H14ZM20 6L21 1H27L30 38H20ZM31 2H36L38 38H29ZM38 1H43L48 14V38H37ZM55 2H61L56 36H46Z" fill="#ffcb34" />
    <path d="M25 3L27 1L32 38H26ZM43 2L47 9L44 37H38ZM48 7L53 5L52 36H46ZM5 15L8 13L13 34Z" fill="#f19b1e" />
    <path d="M8 12L16 36M33 3V35M36 15L48 34M57 5L51 33" stroke="#ffe05e" strokeWidth="2.500" />
    <path d="M5 32Q9 36 17 35Q31 40 43 35Q51 37 57 32L51 61Q50 63.500 47 63.500H16Q12 63 11 60Z" fill="#fb2834" /><path d="M52 34L57 32L51 61Q50 63.500 47 63.500H29C44 59 49 49 52 34Z" fill="#e90e2c" />
    <path d="M17 45Q31 42 45 45L42 54H20Z" fill="#ffb32a" />
  </Pic>
);

const KfcBucket = () => (
  <Pic>
    <path d="M50 15L57 7C52 3 57 0 59 5C66 7 62 13 59 11L53 20Z" fill="#f7dec1" stroke={K} strokeWidth="1.500" />
    <path d="M11 31C-1 33 1 20 9 18L14 20L28 2V18L34 16L54 13C57 22 56 25 49 27L56 31Z" fill="#e38a2c" stroke={K} strokeWidth="2" />
    <path d="M11 29L28 2V24ZM28 31Q30 22 40 22H58Q61 27 57 31Z" fill="#ed9433" stroke={K} strokeWidth="1.600" /><path d="M16 18L24 25M45 19L42 17M40 27L44 25M8 25H9M50 25H51" stroke={K} strokeWidth="2" />
    <path d="M3.500 31.500H60.500L57 62.500H8.500Z" fill="#df3e31" stroke={K} strokeWidth="2.200" /><path d="M59 33L56 60H34Q55 50 59 33Z" fill="#d0352b" /><path d="M10 36V38M11 41L12 48" stroke={K} strokeWidth="2" />
  </Pic>
);

type Item = [string, () => ReactNode];

const ITEMS: Item[] = [
  ["IceCream", IceCream], ["Set", Boy], ["Cheesecake", Cheesecake], ["Malina Banan", MalinaBanan], ["Kruasan", Kruasan],
  ["KitKat", KitKat], ["Bounty", Bounty], ["Fistashkoviy", Pistachio], [".", Market], ["Fanta", Fanta],
  ["Non", Bread], ["Achchiq KFC", HotWing], ["Club sandwich", Sandwich], ["Club Combo", Sandwich], ["Burger Combo", Burger],
  ["Lavash Combo", Wrap], ["KFC Combo", Drumsticks], ["Energy", Energy], ["Sok", Sok], ["Evita", Bottle],
  ["Coca-Cola", Pepsi], ["Royal Anor Ichimligi", Royal], ["Sous", Mustard], ["Sous", Ketchup], ["Sous", Bowl],
  ["Ichimlik", Bottle], ["Cappucino", Cappuccino], ["Coffee 3×1", Coffee], ["Choy", Tea], ["Razliv-Cola", Cola],
  ["Okean", Coconut], ["Moxito", Mojito], ["Tvorojniy", Cheese], ["Oq mevalik", Cupcake], ["Malina Cheesecake", MalinaCake],
  ["Snickers Cheesecake", Cheesecake], ["Snickers", Snickers], ["Banan tvorojniy", Banana], ["Family assorti", Assorti], ["Mujskoy kapriz", Salad],
  ["Sezar", Salad], ["Grecheskiy", GreekSalad], ["Ko'k bodring", Jar], ["Salat Sveji", Lettuce], ["Hot Dog", HotDog],
  ["Burger", Burger], ["Lavash", Wrap], ["Doner", Doner], ["Free", Fries], ["KFC", KfcBucket],
];

function LineIcon({ children }: { children: ReactNode }) {
  return (
    <svg width="40" height="40" viewBox="0 0 24 24" fill="none" stroke="currentColor" strokeWidth="2" strokeLinecap="round" strokeLinejoin="round">
      {children}
    </svg>
  );
}

const HomeIcon = () => (
  <LineIcon>
    <path d="m3 9 9-7 9 7v11a2 2 0 0 1-2 2H5a2 2 0 0 1-2-2z" />
    <polyline points="9 22 9 12 15 12 15 22" />
  </LineIcon>
);

const OrdersIcon = () => (
  <LineIcon>
    <path d="M4 2v20l2-1 2 1 2-1 2 1 2-1 2 1 2-1 2 1V2l-2 1-2-1-2 1-2-1-2 1-2-1-2 1Z" />
    <path d="M14 8H8M16 12H8M13 16H8" />
  </LineIcon>
);

const NAV: { label: string; icon: ReactNode; active?: boolean }[] = [
  { label: "Log out", icon: <LogOut size={40} /> },
  { label: "Floor plan", icon: <Layers2 size={40} /> },
  { label: "Home", icon: <HomeIcon />, active: true },
  { label: "Orders", icon: <OrdersIcon /> },
  { label: "More", icon: <Menu size={40} /> },
];

export default function App() {
  return (
    <div className="flex h-[2050px] w-[3584px] flex-col overflow-hidden bg-[#0f110e] font-['Inter',sans-serif] text-[#d5e3c8]">
      <div className="flex h-[1922px]">
        <main className="flex w-[2686px] flex-col px-8 pt-[54px]">
          <div className="flex justify-end">
            <button className="flex size-24 items-center justify-center rounded-xl bg-[#161916] text-[#8eea5c]">
              <Search size={48} />
            </button>
          </div>
          <div className="mt-8 grid grid-cols-5 gap-8">
            {ITEMS.map(([name, Icon], i) => (
              <div key={i} className="flex h-36 items-center gap-4 rounded-3xl bg-[#121411] px-8 text-[32px] leading-[48px] font-medium tracking-[-0.1px] whitespace-nowrap">
                <Icon />
                <span className="pt-0.5">{name}</span>
              </div>
            ))}
          </div>
        </main>
        <aside className="flex flex-1 flex-col border-l-2 border-[#1b1e1b] px-8 pb-[34px]">
          <header className="flex justify-between">
            <div className="pt-[21px]">
              <h1 className="text-[48px] leading-[64px] font-semibold tracking-[-0.025em]">New sale</h1>
              <p className="mt-[5px] text-[28px] leading-10 tracking-[-0.1px] text-[#8eea5c]">Dine-In</p>
            </div>
            <button className="mt-7 h-24 rounded-full bg-[#4f7f37] px-9 text-[28px] font-semibold text-[#12200b]">Send</button>
          </header>
          <div className="mt-[34px] flex text-[32px] tracking-[-0.1px]">
            <div className="flex h-24 items-center border-b-2 border-[#8eea5c] px-8 pt-px">Check</div>
            <div className="flex h-24 items-center border-b-2 border-transparent px-8 pt-px">Actions</div>
          </div>
          <div className="mt-8 flex h-[92px] items-center justify-center rounded-xl border-2 border-[#1b1e1b] text-[28px] text-[#adba9b]">
            Nothing in your cart...
          </div>
          <div className="mt-auto flex flex-col gap-6 rounded-xl bg-[#121411] px-8 pt-[33px] pb-[31px] text-[32px] leading-[48px]">
            {["Subtotal", "Waiter fee", "Total"].map((label) => (
              <div key={label} className="flex justify-between">
                <span className="text-[#adba9b]">{label}</span>
                <span className="font-medium tracking-[-0.1px]">$0.00</span>
              </div>
            ))}
          </div>
          <div className="mt-8 flex gap-8">
            <button className="flex size-24 items-center justify-center rounded-full bg-[#161916] text-[#8eea5c]">
              <EllipsisVertical size={40} />
            </button>
            <button className="h-24 flex-1 rounded-full bg-[#121411] text-[28px] font-semibold text-[#4f7f37]">Checkout</button>
          </div>
        </aside>
      </div>
      <nav className="grid h-32 grid-cols-5 bg-[#131512]">
        {NAV.map(({ label, icon, active }) => (
          <div key={label} className={active ? "flex flex-col items-center gap-2 pt-5 font-semibold text-[#8eea5c]" : "flex flex-col items-center gap-2 pt-5"}>
            {icon}
            <span className="text-[28px] leading-10">{label}</span>
          </div>
        ))}
      </nav>
    </div>
  );
}
